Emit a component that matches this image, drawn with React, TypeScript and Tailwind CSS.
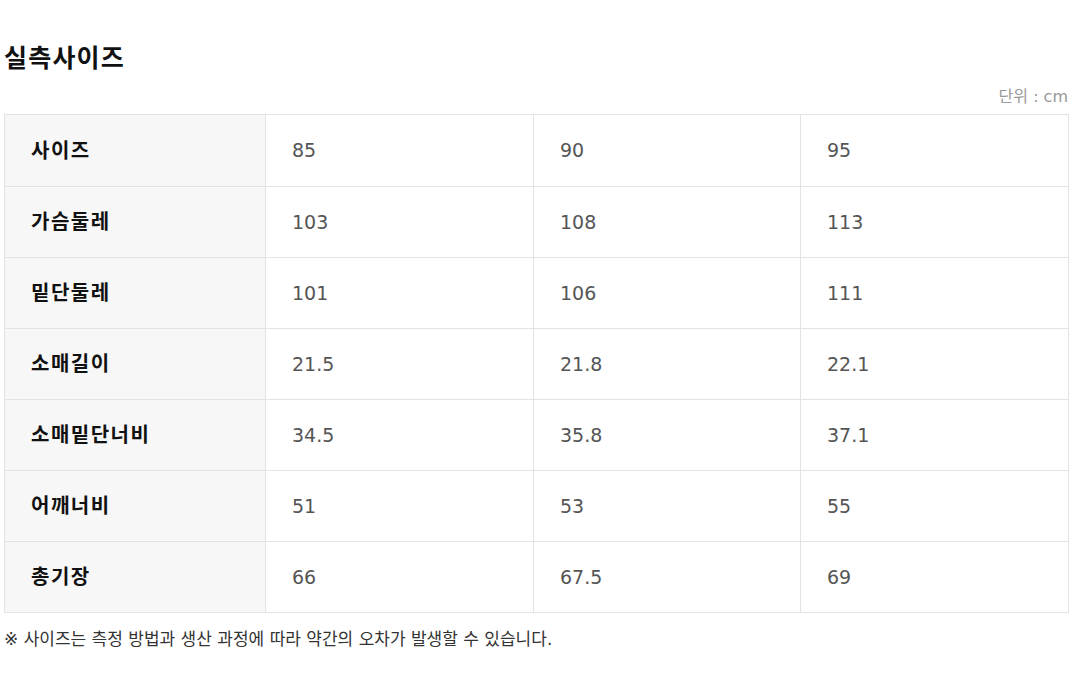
import React from 'react';

const rows: [string, string, string, string][] = [
  ['사이즈', '85', '90', '95'],
  ['가슴둘레', '103', '108', '113'],
  ['밑단둘레', '101', '106', '111'],
  ['소매길이', '21.5', '21.8', '22.1'],
  ['소매밑단너비', '34.5', '35.8', '37.1'],
  ['어깨너비', '51', '53', '55'],
  ['총기장', '66', '67.5', '69'],
];

export default function App() {
  return (
    <div
      className="w-[1072px] h-[691px] bg-white px-[4px] pt-[42px]"
      style={{ fontFamily: '"DejaVu Sans", "Noto Sans CJK KR", sans-serif' }}
    >
      <h1 className="text-[25px] leading-[34px] font-bold tracking-[1.2px] text-[#111]">실측사이즈</h1>
      <div className="mt-[11px] text-right text-[16px] leading-[20px] text-[#999]">단위 : cm</div>
      <table className="mt-[7px] w-[1064px] border-collapse border border-[#e3e3e3] table-fixed">
        <colgroup>
          <col className="w-[261px]" />
          <col className="w-[268px]" />
          <col className="w-[267px]" />
          <col className="w-[268px]" />
        </colgroup>
        <tbody>
          {rows.map(([label, a, b, c], r) => (
            <tr key={label} className={r === 0 ? 'h-[72px]' : 'h-[71px]'}>
              <th className="bg-[#f7f7f7] border border-[#e3e3e3] text-left pl-[26px] text-[20px] tracking-[1.5px] font-bold text-[#111]">
                {label}
              </th>
              {[a, b, c].map((v, i) => (
                <td key={i} className="border border-[#e3e3e3] pl-[26px] text-[19px] text-[#555]">
                  {v}
                </td>
              ))}
            </tr>
          ))}
        </tbody>
      </table>
      <p className="mt-[15px] text-[17px] leading-[22px] text-[#333]">
        ※ 사이즈는 측정 방법과 생산 과정에 따라 약간의 오차가 발생할 수 있습니다.
      </p>
    </div>
  );
}
